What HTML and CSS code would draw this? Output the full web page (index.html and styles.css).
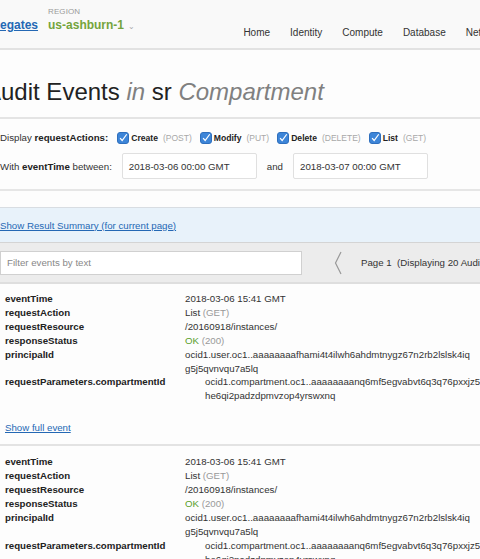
FILE: index.html
```html
<!DOCTYPE html>
<html>
<head>
<meta charset="utf-8">
<link rel="stylesheet" href="styles.css">
</head>
<body>
<div class="page">
  <header class="topbar">
    <div class="brand">
      <a class="delegates" href="#">egates</a>
      <div class="region">
        <span class="region-label">REGION</span>
        <span class="region-name">us-ashburn-1 <span class="caret">&#8964;</span></span>
      </div>
    </div>
    <nav class="nav">
      <span>Home</span>
      <span>Identity</span>
      <span>Compute</span>
      <span>Database</span>
      <span>Networking</span>
    </nav>
  </header>

  <section class="title-area">
    <h1 class="title">Audit Events <em>in</em> sr <em>Compartment</em></h1>
  </section>

  <section class="filters">
    <div class="filter-row actions">
      <span class="label">Display <b>requestActions:</b></span>
      <label class="action"><span class="cb"><svg viewBox="0 0 12 12"><path d="M2.5 6.2 L5 9 L10.5 1.5" fill="none" stroke="#fff" stroke-width="1.5"/></svg></span><b>Create</b><span class="method">(POST)</span></label>
      <label class="action"><span class="cb"><svg viewBox="0 0 12 12"><path d="M2.5 6.2 L5 9 L10.5 1.5" fill="none" stroke="#fff" stroke-width="1.5"/></svg></span><b>Modify</b><span class="method">(PUT)</span></label>
      <label class="action"><span class="cb"><svg viewBox="0 0 12 12"><path d="M2.5 6.2 L5 9 L10.5 1.5" fill="none" stroke="#fff" stroke-width="1.5"/></svg></span><b>Delete</b><span class="method">(DELETE)</span></label>
      <label class="action"><span class="cb"><svg viewBox="0 0 12 12"><path d="M2.5 6.2 L5 9 L10.5 1.5" fill="none" stroke="#fff" stroke-width="1.5"/></svg></span><b>List</b><span class="method">(GET)</span></label>
    </div>
    <div class="filter-row times">
      <span class="label">With <b>eventTime</b> between:</span>
      <div class="date-input first">2018-03-06 00:00 GMT</div>
      <span class="and">and</span>
      <div class="date-input second">2018-03-07 00:00 GMT</div>
    </div>
  </section>

  <div class="summary-bar">
    <a href="#">Show Result Summary (for current page)</a>
  </div>

  <div class="toolbar">
    <div class="search">Filter events by text</div>
    <svg class="chev" viewBox="0 0 8 24"><polyline points="7,1 1.5,12 7,23" fill="none" stroke="#999" stroke-width="1.2"/></svg>
    <span class="paging">Page 1&nbsp; (Displaying 20 Audit Events)</span>
  </div>

  <article class="event">
    <div class="fields">
      <span class="key">eventTime</span><span class="val">2018-03-06 15:41 GMT</span>
      <span class="key">requestAction</span><span class="val">List <span class="muted">(GET)</span></span>
      <span class="key">requestResource</span><span class="val">/20160918/instances/</span>
      <span class="key">responseStatus</span><span class="val"><span class="ok">OK</span> <span class="muted">(200)</span></span>
      <span class="key">principalId</span><span class="val">ocid1.user.oc1..aaaaaaaafhami4t4ilwh6ahdmtnygz67n2rb2lslsk4iq<br>g5j5qvnvqu7a5lq</span>
      <span class="key">requestParameters.compartmentId</span><span class="val indent">ocid1.compartment.oc1..aaaaaaaanq6mf5egvabvt6q3q76pxxjz5x<br>he6qi2padzdpmvzop4yrswxnq</span>
    </div>
    <a class="full" href="#">Show full event</a>
  </article>

  <article class="event">
    <div class="fields">
      <span class="key">eventTime</span><span class="val">2018-03-06 15:41 GMT</span>
      <span class="key">requestAction</span><span class="val">List <span class="muted">(GET)</span></span>
      <span class="key">requestResource</span><span class="val">/20160918/instances/</span>
      <span class="key">responseStatus</span><span class="val"><span class="ok">OK</span> <span class="muted">(200)</span></span>
      <span class="key">principalId</span><span class="val">ocid1.user.oc1..aaaaaaaafhami4t4ilwh6ahdmtnygz67n2rb2lslsk4iq<br>g5j5qvnvqu7a5lq</span>
      <span class="key">requestParameters.compartmentId</span><span class="val indent">ocid1.compartment.oc1..aaaaaaaanq6mf5egvabvt6q3q76pxxjz5x<br>he6qi2padzdpmvzop4yrswxnq</span>
    </div>
    <a class="full" href="#">Show full event</a>
  </article>
</div>
</body>
</html>
```

FILE: styles.css
```css
html, body {
  margin: 0;
  padding: 0;
  background: #fdfdfd;
  overflow: hidden;
}
body {
  width: 480px;
  height: 559px;
  font-family: "Liberation Sans", Arial, sans-serif;
  color: #333;
  font-size: 9.7px;
}
.page {
  width: 480px;
  overflow: hidden;
  white-space: nowrap;
}
a { color: #2468b4; }

/* header */
.topbar {
  height: 48px;
  background: #f9f9f9;
  border-bottom: 2px solid #e2e2e2;
  display: flex;
  align-items: stretch;
}
.brand {
  display: flex;
  align-items: flex-start;
  gap: 10px;
  padding-top: 18px;
  flex-shrink: 0;
}
.delegates {
  font-size: 12px;
  font-weight: bold;
  color: #2468b4;
  line-height: 14px;
}
.region {
  display: flex;
  flex-direction: column;
  margin-top: -12px;
}
.region-label {
  font-size: 8px;
  color: #999;
  line-height: 12px;
  letter-spacing: 0.1px;
}
.region-name {
  font-size: 12px;
  font-weight: bold;
  color: #74a43c;
  line-height: 14px;
}
.caret {
  font-weight: normal;
  color: #aaa;
  font-size: 8px;
  margin-left: 1px;
}
.nav {
  display: flex;
  flex-shrink: 0;
  gap: 20px;
  margin-left: 108px;
  padding-top: 26px;
  font-size: 10px;
  color: #333;
  line-height: 14px;
}

/* title */
.title-area {
  padding: 27px 0 10px;
  border-bottom: 2px solid #e4e4e4;
}
.title {
  margin: 0 0 0 -15px;
  font-size: 24px;
  font-weight: normal;
  line-height: 30px;
  color: #222;
}
.title em {
  color: #808080;
}

/* filters */
.filters {
  padding: 12px 0 10px;
  border-bottom: 2px solid #e6e6e6;
}
.filter-row {
  display: flex;
  align-items: center;
}
.filter-row > * { flex-shrink: 0; }
.actions {
  line-height: 14px;
  height: 14px;
}
.label b { color: #222; }
.action {
  display: flex;
  align-items: center;
  margin-left: 8px;
}
.actions .label { margin-right: 1px; }
.cb {
  width: 12px;
  height: 12px;
  background: #3d85d8;
  border: 1px solid #2f6fbd;
  border-radius: 3px;
  box-sizing: border-box;
  margin-right: 2px;
  display: flex;
}
.cb svg { width: 100%; height: 100%; }
.action b {
  color: #222;
  font-size: 8.6px;
}
.method {
  font-size: 8.5px;
  color: #a8a8a8;
  margin-left: 5px;
}
.times {
  margin-top: 8px;
}
.date-input {
  height: 26px;
  box-sizing: border-box;
  background: #fff;
  border: 1px solid #e0e0e0;
  border-radius: 2px;
  display: flex;
  align-items: center;
  padding-left: 6px;
  color: #333;
}
.date-input.first { width: 135px; margin-left: 10px; }
.and { margin: 0 10px; }
.date-input.second { width: 135px; }

/* summary */
.summary-bar {
  margin-top: 16px;
  height: 34px;
  background: #e8f2fa;
  border-top: 1px solid #d8dde2;
  display: flex;
  align-items: center;
}

/* toolbar */
.toolbar {
  height: 39px;
  background: #ececec;
  border-top: 1px solid #d4d4d4;
  border-bottom: 2px solid #dedede;
  display: flex;
  align-items: center;
}
.toolbar > * { flex-shrink: 0; }
.search {
  width: 302px;
  height: 24px;
  box-sizing: border-box;
  background: #fff;
  border: 1px solid #d0d0d0;
  display: flex;
  align-items: center;
  padding-left: 6px;
  color: #888;
}
.chev {
  width: 8px;
  height: 24px;
  margin-left: 32px;
}
.paging {
  margin-left: 19px;
  color: #333;
}

/* events */
.event {
  padding: 8px 0 9px 5px;
  border-bottom: 2px solid #e3e3e3;
  background: #fdfdfd;
}
.event + .event { padding-top: 9px; }
.fields {
  display: grid;
  grid-template-columns: 180px 1fr;
  line-height: 13.9px;
}
.key {
  font-weight: bold;
  color: #222;
}
.val { color: #333; }
.val.indent { padding-left: 20px; }
.muted { color: #999; }
.ok { color: #5aa02c; }
.full {
  display: inline-block;
  margin-top: 18px;
  line-height: 14px;
}
```
